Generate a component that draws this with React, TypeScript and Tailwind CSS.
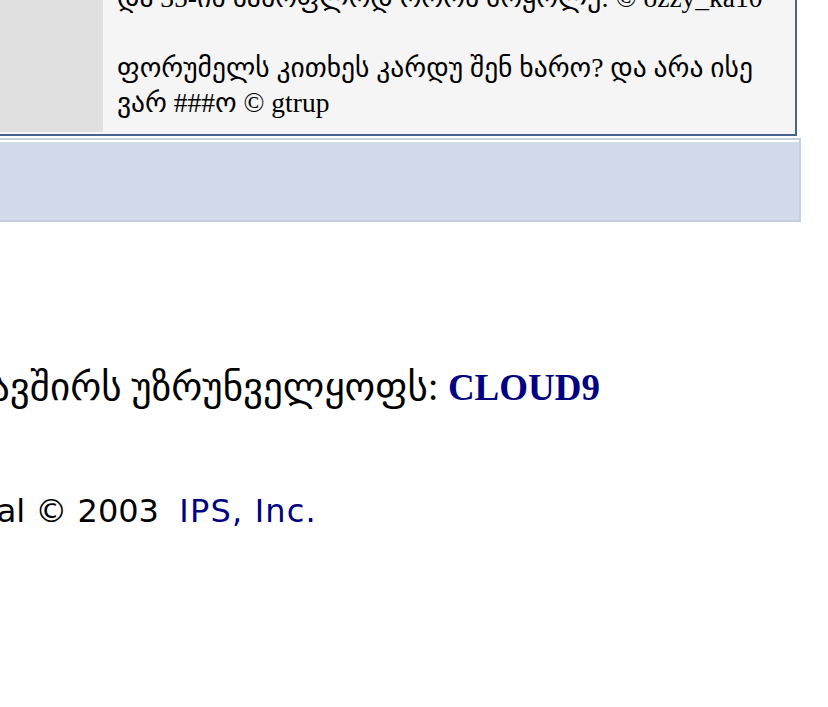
import React from "react";

export default function App() {
  const serif = { fontFamily: '"Liberation Serif", "DejaVu Sans", serif' };
  const sans = { fontFamily: '"DejaVu Sans", "Liberation Sans", sans-serif' };
  return (
    <div className="w-[828px] h-[707px] overflow-hidden bg-white">
      <div className="-mt-[20px]">
        {/* post table */}
        <div className="w-[797px] border-r-2 border-b-2 border-[#4a6491] bg-[#f5f5f5] pb-[2px]">
          <div className="flex">
            <div className="w-[103px] shrink-0 bg-[#e0e0e0]" />
            <div
              className="flex-1 bg-[#f5f5f5] pl-[14px] pr-[10px] pb-[12px] text-[27.5px] leading-[35px] text-black"
              style={serif}
            >
              <div className="whitespace-nowrap">და 35-ის სასოფლოდ ოროს მოყოლე: © ozzy_ka10</div>
              <div className="h-[35px]" />
              <div>ფორუმელს კითხეს კარდუ შენ ხარო? და არა ისე ვარ ###ო © gtrup</div>
            </div>
          </div>
        </div>
        {/* strip */}
        <div className="mt-[2px] w-[801px] border-2 border-[#c4cfdf] border-l-0 bg-[#d1dbea]">
          <div className="h-[2px] bg-white" />
          <div className="h-[78px]" />
        </div>
        {/* footer */}
        <div className="mt-[145px] flex h-[40px] w-[600px] items-baseline justify-end whitespace-nowrap leading-[40px] text-black" style={serif}>
          <span className="text-[39px]">ინტერნეტ კავშირს უზრუნველყოფს:</span>
          <span className="text-[37px] font-bold text-[#000080]">&nbsp;CLOUD9</span>
        </div>
        <div className="mt-[84px] flex w-[317px] justify-end whitespace-nowrap text-[32px] leading-[40px] text-black" style={sans}>
          <span>Invision Power Board v1.3.1 Final © 2003&nbsp;&nbsp;</span>
          <span className="tracking-[1.2px] text-[#000080]">IPS, Inc.</span>
        </div>
      </div>
    </div>
  );
}
